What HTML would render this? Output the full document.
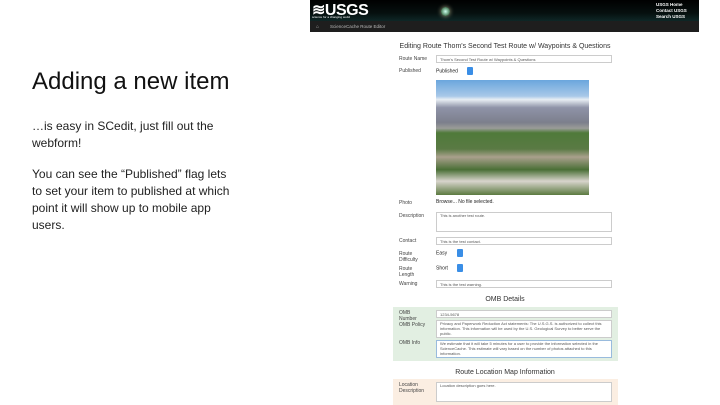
<!DOCTYPE html>
<html><head><style>
body{margin:0;width:720px;height:405px;background:#fff;position:relative;overflow:hidden;font-family:"Liberation Sans",sans-serif;}
.a{position:absolute;}
.t{color:#222;font-size:12px;line-height:17px;}
.l{position:absolute;left:399px;font-size:5px;color:#444;line-height:6px;}
.f{position:absolute;left:436px;width:176px;height:8px;border:1px solid #ccc;background:#fff;font-size:4px;color:#555;line-height:8px;padding-left:3px;box-sizing:border-box;}
.s{position:absolute;left:436px;height:9px;font-size:5px;color:#222;line-height:9px;}
.s b{display:inline-block;width:6px;height:8px;background:#3a8ee6;vertical-align:middle;margin-left:8px;border-radius:1px;}
.h{position:absolute;font-size:7px;color:#333;text-align:center;width:230px;left:390px;}
</style></head><body>
<div class="a" style="left:32px;top:68px;font-size:24px;color:#111;">Adding a new item</div>
<div class="a t" style="left:32px;top:118px;width:200px;">…is easy in SCedit, just fill out the webform!</div>
<div class="a t" style="left:32px;top:166px;width:205px;">You can see the “Published” flag lets to set your item to published at which point it will show up to mobile app users.</div>

<div class="a" style="left:310px;top:0;width:389px;height:22px;background:linear-gradient(#000,#06100f 60%,#0f2a2a);"></div>
<div class="a" style="left:310px;top:21px;width:389px;height:11px;background:#1e1e1e;"></div>
<div class="a" style="left:312px;top:0;font-size:16px;font-weight:bold;color:#fff;letter-spacing:-0.5px;">≋USGS</div>
<div class="a" style="left:312px;top:15px;font-size:3px;color:#fff;">science for a changing world</div>
<div class="a" style="left:441px;top:7px;width:9px;height:9px;border-radius:50%;background:radial-gradient(#cfe,#586 60%,#332);box-shadow:0 0 5px #aa8;"></div>
<div class="a" style="left:656px;top:2px;font-size:4.5px;line-height:6px;color:#fff;font-weight:bold;">USGS Home<br>Contact USGS<br>Search USGS</div>
<div class="a" style="left:316px;top:24px;font-size:5px;color:#aaa;">⌂</div>
<div class="a" style="left:330px;top:24px;font-size:4.5px;color:#bbb;">ScienceCache Route Editor</div>

<div class="h" style="top:43px;">Editing Route Thom's Second Test Route w/ Waypoints &amp; Questions</div>
<div class="l" style="top:56px;">Route Name</div><div class="f" style="top:55px;">Thom's Second Test Route w/ Waypoints &amp; Questions</div>
<div class="l" style="top:68px;">Published</div><div class="s" style="top:67px;">Published <b></b></div>
<div class="a" style="left:436px;top:80px;width:153px;height:115px;background:linear-gradient(#6aa6dd 0%,#a8c8e8 14%,#e8eef4 17%,#8f93a8 24%,#7c7f8c 37%,#9a9c98 42%,#4f7a3a 46%,#5a7a44 60%,#a9a08c 67%,#4a6f36 78%,#d8d4cc 88%,#5c7a40 100%);"></div>

<div class="l" style="top:200px;">Photo</div><div class="s" style="top:198px;">Browse... No file selected.</div>
<div class="l" style="top:213px;">Description</div><div class="f" style="top:212px;height:20px;line-height:6px;">This is another test route.</div>
<div class="l" style="top:238px;">Contact</div><div class="f" style="top:237px;">This is the test contact.</div>
<div class="l" style="top:251px;">Route<br>Difficulty</div><div class="s" style="top:249px;">Easy <b></b></div>
<div class="l" style="top:266px;">Route<br>Length</div><div class="s" style="top:264px;">Short <b></b></div>
<div class="l" style="top:281px;">Warning</div><div class="f" style="top:280px;">This is the test warning.</div>
<div class="h" style="top:296px;">OMB Details</div>
<div class="a" style="left:393px;top:307px;width:225px;height:54px;background:#e2efe2;"></div>
<div class="l" style="top:310px;">OMB<br>Number<br>OMB Policy</div><div class="f" style="top:310px;">1234-5678</div>
<div class="f" style="top:320px;height:18px;line-height:5px;">Privacy and Paperwork Reduction Act statements: The U.S.G.S. is authorized to collect this information. This information will be used by the U.S. Geological Survey to better serve the public.</div>
<div class="l" style="top:340px;">OMB Info</div><div class="f" style="top:340px;height:18px;line-height:5px;border-color:#9bd;">We estimate that it will take 5 minutes for a user to provide the information selected in the ScienceCache. This estimate will vary based on the number of photos attached to this information.</div>
<div class="h" style="top:369px;">Route Location Map Information</div>
<div class="a" style="left:393px;top:379px;width:225px;height:26px;background:#fbeee2;"></div>
<div class="l" style="top:382px;">Location<br>Description</div><div class="f" style="top:382px;height:20px;line-height:6px;">Location description goes here.</div>
</body></html>
